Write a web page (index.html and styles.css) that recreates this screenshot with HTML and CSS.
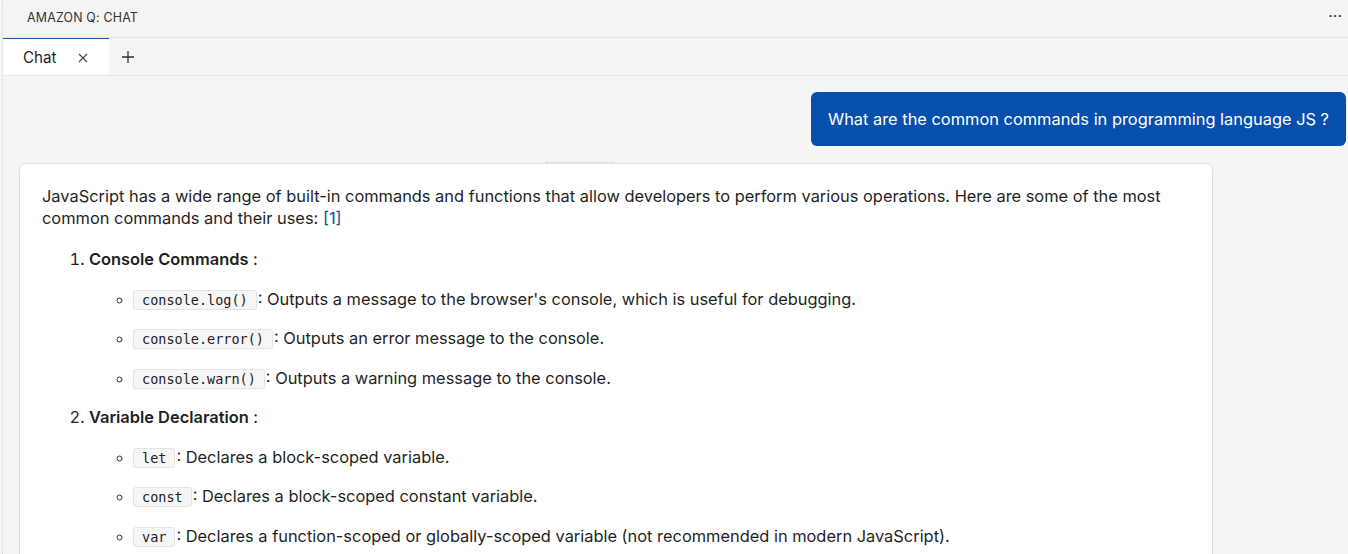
FILE: index.html
```html
<!DOCTYPE html>
<html lang="en">
<head>
<meta charset="utf-8">
<title>Amazon Q: Chat</title>
<link rel="stylesheet" href="styles.css">
</head>
<body>
<div class="panel">
  <header class="panel-header">
    <span class="panel-title">AMAZON Q: CHAT</span>
    <span class="panel-more">···</span>
  </header>
  <nav class="tabbar">
    <div class="tab active">
      <span class="tab-label">Chat</span>
      <svg class="tab-close" width="10" height="10" viewBox="0 0 10 10"><path d="M1 1l8 8M9 1l-8 8" stroke="#444" stroke-width="1.1" fill="none"/></svg>
    </div>
    <div class="tab-add">
      <svg width="14" height="14" viewBox="0 0 14 14"><path d="M7 1v12M1 7h12" stroke="#333" stroke-width="1.3" fill="none"/></svg>
    </div>
  </nav>
  <main class="chat">
    <div class="row row-user">
      <div class="bubble-user">What are the common commands in programming language JS ?</div>
    </div>
    <div class="row row-answer">
      <div class="card-answer">
        <p>JavaScript has a wide range of built-in commands and functions that allow developers to perform various operations. Here are some of the most common commands and their uses: <a class="ref" href="#">[1]</a></p>
        <ol class="steps">
          <li><strong>Console Commands</strong> :
            <ul class="sub">
              <li><code>console.log()</code>: Outputs a message to the browser's console, which is useful for debugging.</li>
              <li><code>console.error()</code>: Outputs an error message to the console.</li>
              <li><code>console.warn()</code>: Outputs a warning message to the console.</li>
            </ul>
          </li>
          <li><strong>Variable Declaration</strong> :
            <ul class="sub">
              <li><code>let</code>: Declares a block-scoped variable.</li>
              <li><code>const</code>: Declares a block-scoped constant variable.</li>
              <li><code>var</code>: Declares a function-scoped or globally-scoped variable (not recommended in modern JavaScript).</li>
            </ul>
          </li>
        </ol>
      </div>
    </div>
  </main>
</div>
</body>
</html>
```
FILE: styles.css
```css
* { box-sizing: border-box; }
html, body { margin: 0; padding: 0; }
body {
  background: #f5f5f5;
  font-family: Inter, "Liberation Sans", Arial, sans-serif;
  color: #1f1f1f;
  height: 554px;
  overflow: hidden;
}
.panel {
  border-left: 1px dotted #d6d6d6;
  margin-left: 2px;
  height: 554px;
}
.panel-header {
  height: 38px;
  display: flex;
  align-items: center;
  justify-content: space-between;
  padding: 0 6px 0 24px;
  border-bottom: 1px solid #e4e4e4;
}
.panel-title {
  font-size: 12.4px;
  color: #333;
  letter-spacing: 0.2px;
  margin-top: -2px;
}
.panel-more {
  font-size: 16px;
  color: #333;
  margin-top: -5px;
}
.tabbar {
  height: 38px;
  display: flex;
  align-items: stretch;
  border-bottom: 1px solid #e4e4e4;
}
.tab {
  width: 106px;
  display: flex;
  align-items: center;
  padding: 1px 0 0 20px;
  font-size: 15.2px;
  color: #1f1f1f;
}
.tab.active {
  background: #fff;
  border-top: 1px solid #1c5aa8;
}
.tab-label { width: 55px; }
.tab-close { margin-top: 1px; }
.tab-add {
  display: flex;
  align-items: center;
  padding-left: 12px;
}
.chat {
  padding: 16px 0 0 0;
}
.row { display: flex; }
.row-user { justify-content: flex-end; padding-right: 2px; }
.bubble-user {
  background: #074fac;
  color: #fff;
  font-size: 16.4px;
  line-height: 22px;
  padding: 16px 17px 16px 17px;
  border-radius: 6px;
}
.row-answer { padding: 17px 0 0 16px; }
.card-answer {
  position: relative;
  width: 1194px;
  background: #fff;
  border: 1px solid #e2e2e2;
  border-radius: 7px;
  padding: 21px 22px 20px 22px;
  font-size: 16.4px;
  line-height: 22px;
}
.card-answer::before {
  content: "";
  position: absolute;
  top: -2px;
  left: 526px;
  width: 68px;
  border-top: 1px dotted #cfcfcf;
}
.card-answer p { margin: 0 0 19px 0; }
.card-answer strong { font-weight: 600; }
.ref { color: #0b4fa8; text-decoration: none; }
.steps { margin: 0; padding-left: 47px; }
.steps > li { margin-top: 17.5px; }
.steps > li:first-child { margin-top: 0; }
.sub { list-style-type: circle; margin: 0; padding-left: 44px; }
.sub > li { margin-top: 17.5px; }
.sub > li::marker { font-size: 14px; color: #333; }
code {
  font-family: "DejaVu Sans Mono", monospace;
  font-size: 13.5px;
  line-height: 16px;
  background: #f6f6f6;
  border: 1px solid #e4e4e4;
  border-radius: 3px;
  padding: 1px 8px 1px 8px;
  margin-right: 1px;
  color: #222;
}
```
